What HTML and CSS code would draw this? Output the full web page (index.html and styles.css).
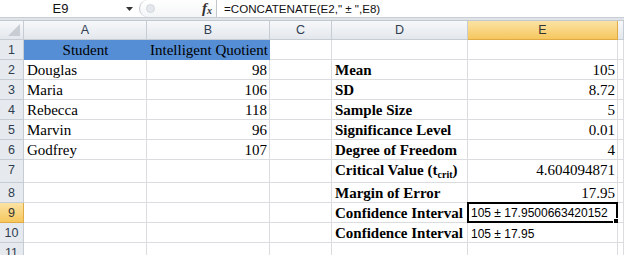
FILE: index.html
```html
<!DOCTYPE html>
<html lang="en">
<head>
    <meta charset="UTF-8">
    <title>Confidence Interval</title>
    <link rel="stylesheet" href="styles.css">
</head>
<body>
    <!-- Barra de fórmulas -->
    <div class="formula-bar">
        <div class="name-box">E9</div>
        <div class="name-arrow">
            <svg width="7" height="4" viewBox="0 0 7 4"><path d="M0 0H7L3.5 4Z" fill="#333"/></svg>
        </div>
        <div class="fx-box">
            <span class="grip"></span>
            <span class="fx">f<sub>x</sub></span>
        </div>
        <div class="formula">=CONCATENATE(E2," ± ",E8)</div>
    </div>
    <div class="bar-gap"></div>

    <div class="sheet">
        <div class="corner"></div>
        <div class="col-head">A</div>
        <div class="col-head">B</div>
        <div class="col-head">C</div>
        <div class="col-head">D</div>
        <div class="col-head active">E</div>
        <div class="col-head"></div>

        <div class="row-head">1</div>
        <div class="cell head-fill center">Student</div>
        <div class="cell head-fill center">Intelligent Quotient</div>
        <div class="cell"></div>
        <div class="cell"></div>
        <div class="cell"></div>
        <div class="cell"></div>

        <div class="row-head">2</div>
        <div class="cell">Douglas</div>
        <div class="cell num">98</div>
        <div class="cell"></div>
        <div class="cell label">Mean</div>
        <div class="cell num">105</div>
        <div class="cell"></div>

        <div class="row-head">3</div>
        <div class="cell">Maria</div>
        <div class="cell num">106</div>
        <div class="cell"></div>
        <div class="cell label">SD</div>
        <div class="cell num">8.72</div>
        <div class="cell"></div>

        <div class="row-head">4</div>
        <div class="cell">Rebecca</div>
        <div class="cell num">118</div>
        <div class="cell"></div>
        <div class="cell label">Sample Size</div>
        <div class="cell num">5</div>
        <div class="cell"></div>

        <div class="row-head">5</div>
        <div class="cell">Marvin</div>
        <div class="cell num">96</div>
        <div class="cell"></div>
        <div class="cell label">Significance Level</div>
        <div class="cell num">0.01</div>
        <div class="cell"></div>

        <div class="row-head">6</div>
        <div class="cell">Godfrey</div>
        <div class="cell num">107</div>
        <div class="cell"></div>
        <div class="cell label">Degree of Freedom</div>
        <div class="cell num">4</div>
        <div class="cell"></div>

        <div class="row-head">7</div>
        <div class="cell"></div>
        <div class="cell"></div>
        <div class="cell"></div>
        <div class="cell label">Critical Value (t<sub>crit</sub>)</div>
        <div class="cell num">4.604094871</div>
        <div class="cell"></div>

        <div class="row-head">8</div>
        <div class="cell"></div>
        <div class="cell"></div>
        <div class="cell"></div>
        <div class="cell label">Margin of Error</div>
        <div class="cell num">17.95</div>
        <div class="cell"></div>

        <div class="row-head active">9</div>
        <div class="cell"></div>
        <div class="cell"></div>
        <div class="cell"></div>
        <div class="cell label">Confidence Interval</div>
        <div class="cell text selected">105 ± 17.9500663420152<span class="handle"></span></div>
        <div class="cell"></div>

        <div class="row-head">10</div>
        <div class="cell"></div>
        <div class="cell"></div>
        <div class="cell"></div>
        <div class="cell label">Confidence Interval</div>
        <div class="cell text">105 ± 17.95</div>
        <div class="cell"></div>

        <div class="row-head">11</div>
        <div class="cell"></div>
        <div class="cell"></div>
        <div class="cell"></div>
        <div class="cell"></div>
        <div class="cell"></div>
        <div class="cell"></div>
    </div>
</body>
</html>
```

FILE: styles.css
```css
body {
    margin: 0;
    width: 624px;
    height: 255px;
    overflow: hidden;
    background: white;
    font-family: "Liberation Serif", "Times New Roman", serif;
}

/* Barra de fórmulas */
.formula-bar {
    display: flex;
    height: 17px;
    background: white;
    border-bottom: 1px solid #c9ced5;
    font-family: "Liberation Sans", Arial, sans-serif;
    font-size: 12px;
    color: #111;
}
.name-box {
    width: 121px;
    line-height: 18px;
    font-size: 13px;
    text-align: center;
}
.name-arrow {
    width: 16px;
    display: flex;
    align-items: center;
    justify-content: center;
    padding-top: 1px;
}
.fx-box {
    position: relative;
    width: 76px;
    margin-left: 2px;
    border-left: 1px solid #c2c7ce;
    border-right: 1px solid #c2c7ce;
    border-radius: 9px 0 0 9px;
    background: linear-gradient(#ffffff, #f4f5f7);
}
.grip {
    position: absolute;
    left: 6px;
    top: 4px;
    width: 7px;
    height: 7px;
    border-radius: 50%;
    background: #e4e7eb;
    border: 1px solid #d3d7dc;
}
.fx {
    position: absolute;
    right: 4px;
    top: 0;
    line-height: 16px;
    font-family: "Liberation Serif", serif;
    font-style: italic;
    font-weight: bold;
    font-size: 15px;
    color: #333;
}
.fx sub {
    font-size: 10px;
    vertical-align: -1px;
    line-height: 0;
}
.formula {
    flex: 1;
    padding-left: 7px;
    line-height: 18px;
    font-size: 11.6px;
}
.bar-gap {
    height: 2px;
    background: #e0e4e9;
}

/* Hoja */
.sheet {
    display: grid;
    grid-template-columns: 24px 123px 123px 62px 136px 150px 1fr;
    grid-template-rows: 19px 20px 20px 20px 20px 20px 20px 23px 20px 20px 20px 20px;
    border-top: 1px solid #c3c9d0;
    background: #e8ebef;
}
.corner,
.col-head,
.row-head {
    background: linear-gradient(#f7f8fa, #e3e7ec);
    border-right: 1px solid #c6ccd3;
    border-bottom: 1px solid #c6ccd3;
    font-family: "Liberation Sans", Arial, sans-serif;
    font-size: 12.5px;
    color: #2f3d50;
    text-align: center;
}
.corner {
    position: relative;
}
.corner::after {
    content: "";
    position: absolute;
    right: 3px;
    bottom: 3px;
    border-left: 12px solid transparent;
    border-bottom: 12px solid #c8cdd3;
}
.col-head {
    line-height: 18px;
}
.row-head {
    background: #e6e9ed;
    line-height: 21px;
}
.col-head.active,
.row-head.active {
    background: linear-gradient(#fbe3a4, #f6c75e);
    border-color: #e0aa44;
    color: #333;
}

.cell {
    position: relative;
    background: white;
    border-right: 1px solid #dadcdf;
    border-bottom: 1px solid #dadcdf;
    padding: 0 2px 0 3px;
    font-size: 15px;
    line-height: 21px;
    white-space: nowrap;
    color: #000;
}
.head-fill {
    background: #558ed5;
    border-right-color: #558ed5;
    border-bottom-color: #558ed5;
}
.center {
    text-align: center;
}
.num {
    text-align: right;
}
.label {
    font-weight: bold;
}
.label sub {
    font-size: 10px;
    vertical-align: -3px;
}
.text {
    font-family: "Liberation Sans", Arial, sans-serif;
    font-size: 12px;
    line-height: 23px;
}
.selected {
    border: 2px solid #000;
    margin: -1px 0 0 -1px;
    padding-left: 2px;
    line-height: 19px;
}
.handle {
    position: absolute;
    right: -4px;
    bottom: -4px;
    width: 5px;
    height: 5px;
    background: #000;
    border: 1px solid white;
}
```
